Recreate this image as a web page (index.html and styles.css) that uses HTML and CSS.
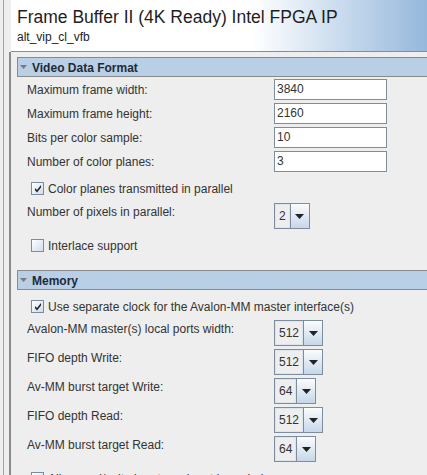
FILE: index.html
```html
<!DOCTYPE html>
<html>
<head>
<meta charset="utf-8">
<link rel="stylesheet" href="styles.css">
</head>
<body>
<div class="shell">
  <header class="banner">
    <h1 class="title">Frame Buffer II (4K Ready) Intel FPGA IP</h1>
    <div class="subtitle">alt_vip_cl_vfb</div>
  </header>
  <main class="panel">
    <section class="group">
      <div class="group-head"><svg class="caret" width="7" height="4" viewBox="0 0 7 4"><polygon points="0,0 7,0 3.5,4" fill="#7b7b7b"/></svg>Video Data Format</div>
      <div class="group-body">
        <div class="field"><span class="label">Maximum frame width:</span><div class="text">3840</div></div>
        <div class="field"><span class="label">Maximum frame height:</span><div class="text">2160</div></div>
        <div class="field"><span class="label">Bits per color sample:</span><div class="text">10</div></div>
        <div class="field"><span class="label">Number of color planes:</span><div class="text">3</div></div>
        <div class="check-row after-fields"><span class="box"><svg width="11" height="11" viewBox="0 0 11 11"><polygon points="3,5 5,7 9,2 9,4.6 5,9.4 3,7.2" fill="#222"/></svg></span>Color planes transmitted in parallel</div>
        <div class="combo-field first-combo"><span class="label">Number of pixels in parallel:</span><div class="combo"><span class="combo-val">2</span><span class="combo-btn"><svg width="9" height="5" viewBox="0 0 9 5"><polygon points="0,0 9,0 4.5,5" fill="#222"/></svg></span></div></div>
        <div class="check-row after-combo"><span class="box"></span>Interlace support</div>
      </div>
    </section>
    <section class="group memory">
      <div class="group-head"><svg class="caret" width="7" height="4" viewBox="0 0 7 4"><polygon points="0,0 7,0 3.5,4" fill="#7b7b7b"/></svg>Memory</div>
      <div class="group-body">
        <div class="check-row after-head"><span class="box"><svg width="11" height="11" viewBox="0 0 11 11"><polygon points="3,5 5,7 9,2 9,4.6 5,9.4 3,7.2" fill="#222"/></svg></span>Use separate clock for the Avalon-MM master interface(s)</div>
        <div class="combo-field after-check"><span class="label">Avalon-MM master(s) local ports width:</span><div class="combo"><span class="combo-val">512</span><span class="combo-btn"><svg width="9" height="5" viewBox="0 0 9 5"><polygon points="0,0 9,0 4.5,5" fill="#222"/></svg></span></div></div>
        <div class="combo-field"><span class="label">FIFO depth Write:</span><div class="combo"><span class="combo-val">512</span><span class="combo-btn"><svg width="9" height="5" viewBox="0 0 9 5"><polygon points="0,0 9,0 4.5,5" fill="#222"/></svg></span></div></div>
        <div class="combo-field"><span class="label">Av-MM burst target Write:</span><div class="combo"><span class="combo-val">64</span><span class="combo-btn"><svg width="9" height="5" viewBox="0 0 9 5"><polygon points="0,0 9,0 4.5,5" fill="#222"/></svg></span></div></div>
        <div class="combo-field"><span class="label">FIFO depth Read:</span><div class="combo"><span class="combo-val">512</span><span class="combo-btn"><svg width="9" height="5" viewBox="0 0 9 5"><polygon points="0,0 9,0 4.5,5" fill="#222"/></svg></span></div></div>
        <div class="combo-field"><span class="label">Av-MM burst target Read:</span><div class="combo"><span class="combo-val">64</span><span class="combo-btn"><svg width="9" height="5" viewBox="0 0 9 5"><polygon points="0,0 9,0 4.5,5" fill="#222"/></svg></span></div></div>
        <div class="check-row after-combos"><span class="box"></span>Align read/write bursts on burst boundaries</div>
      </div>
    </section>
  </main>
</div>
</body>
</html>
```
FILE: styles.css
```css
* { box-sizing: border-box; }
html, body { margin: 0; height: 100%; overflow: hidden; }
body {
  background: #eeeeee;
  font-family: "Liberation Sans", Arial, sans-serif;
  font-size: 12px;
  color: #333;
}
.shell {
  margin-left: 3px;
  border-left: 1px solid #a3a3a3;
  padding-left: 5px;
  min-height: 100vh;
}
.banner {
  margin-left: 2px;
  height: 52px;
  border-bottom: 1px solid #8c8c8c;
  background: linear-gradient(to right, #ffffff 58%, #95b8dc 100%);
  padding: 7px 0 0 6px;
}
.title {
  margin: 0;
  font-size: 17.5px;
  font-weight: normal;
  line-height: 20px;
  color: #1e1e1e;
  white-space: nowrap;
}
.subtitle {
  margin-top: 3px;
  line-height: 14px;
  color: #222;
}
.panel {
  border-left: 2px solid #8a8a8a;
  padding: 5px 0 0 6px;
  min-height: calc(100vh - 52px);
}
.group-head {
  display: flex;
  align-items: flex-start;
  height: 20px;
  border: 1px solid #8a8a8a;
  border-right: none;
  background: #b8cfe5;
  padding: 1px 0 0 2px;
  line-height: 18px;
  font-weight: bold;
  color: #1e2a38;
}
.caret { margin: 6px 5px 0 0; flex: none; }
.group-body {
  display: flex;
  flex-direction: column;
  padding: 2px 0 0 10px;
}
.memory { margin-top: 14px; }
.field {
  display: grid;
  grid-template-columns: 247px auto;
  align-items: center;
  height: 21px;
  margin-bottom: 3px;
}
.label { white-space: nowrap; line-height: 18px; }
.text {
  width: 113px;
  height: 21px;
  border: 1px solid #7d8d9d;
  background: #fff;
  padding-left: 2px;
  line-height: 19px;
  color: #333;
}
.check-row {
  display: flex;
  align-items: center;
  gap: 4px;
  height: 21px;
  flex: none;
  padding-left: 4px;
  white-space: nowrap;
}
.after-fields { margin-top: 3px; }
.after-combo { margin-top: 6px; }
.after-head { margin-top: 4px; }
.after-check { margin-top: 3px; }
.after-combos { margin-top: 3px; }
.box {
  width: 13px;
  height: 13px;
  flex: none;
  border: 1px solid #7b8c9c;
  background: linear-gradient(135deg, #ffffff 0%, #e6eef6 50%, #cfdcea 100%);
}
.box svg { display: block; }
.combo-field {
  display: grid;
  grid-template-columns: 247px auto;
  align-items: start;
  height: 26px;
  flex: none;
  margin-bottom: 3px;
}
.first-combo { margin-top: 4px; margin-bottom: 0; }
.combo {
  display: inline-flex;
  justify-self: start;
  height: 26px;
  border: 1px solid #7d8d9d;
}
.combo-val {
  border: 1px solid #dbe5ef;
  background: #eeeeee;
  padding: 0 3px;
  line-height: 22px;
  color: #333;
}
.combo-btn {
  width: 19px;
  border-left: 1px solid #7d8d9d;
  background: linear-gradient(#fbfcfd, #c6d7e9);
  display: flex;
  align-items: center;
  justify-content: center;
}
.combo-btn svg { display: block; }
```
